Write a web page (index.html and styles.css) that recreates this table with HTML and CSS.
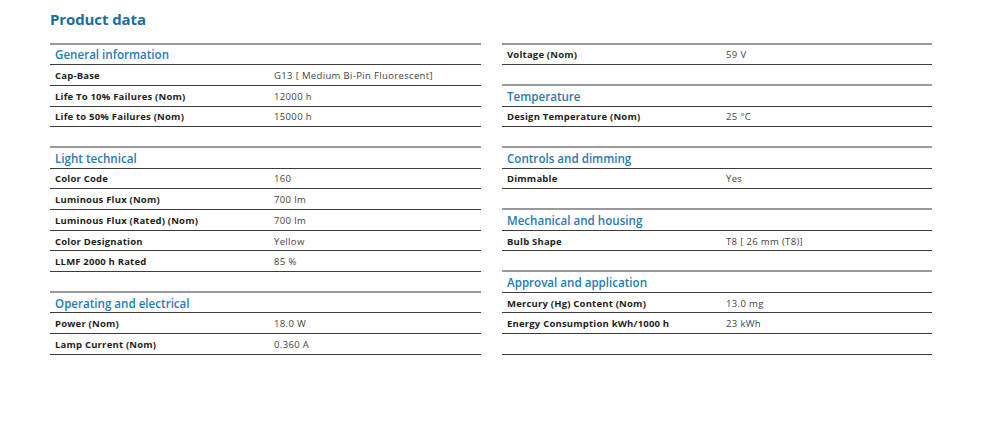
FILE: index.html
```html
<!DOCTYPE html>
<html>
<head>
<meta charset="utf-8">
<link rel="stylesheet" href="styles.css">
</head>
<body>
<div class="page">
  <h1 class="title">Product data</h1>
  <div class="sheet">
    <div class="col">
      <div class="row head">General information</div>
      <div class="row"><span class="lbl">Cap-Base</span><span class="val">G13 [ Medium Bi-Pin Fluorescent]</span></div>
      <div class="row"><span class="lbl">Life To 10% Failures (Nom)</span><span class="val">12000 h</span></div>
      <div class="row"><span class="lbl">Life to 50% Failures (Nom)</span><span class="val">15000 h</span></div>
      <div class="row gap"></div>
      <div class="row head">Light technical</div>
      <div class="row"><span class="lbl">Color Code</span><span class="val">160</span></div>
      <div class="row"><span class="lbl">Luminous Flux (Nom)</span><span class="val">700 lm</span></div>
      <div class="row"><span class="lbl">Luminous Flux (Rated) (Nom)</span><span class="val">700 lm</span></div>
      <div class="row"><span class="lbl">Color Designation</span><span class="val">Yellow</span></div>
      <div class="row"><span class="lbl">LLMF 2000 h Rated</span><span class="val">85 %</span></div>
      <div class="row gap"></div>
      <div class="row head">Operating and electrical</div>
      <div class="row"><span class="lbl">Power (Nom)</span><span class="val">18.0 W</span></div>
      <div class="row"><span class="lbl">Lamp Current (Nom)</span><span class="val">0.360 A</span></div>
    </div>
    <div class="col">
      <div class="row"><span class="lbl">Voltage (Nom)</span><span class="val">59 V</span></div>
      <div class="row gap"></div>
      <div class="row head">Temperature</div>
      <div class="row"><span class="lbl">Design Temperature (Nom)</span><span class="val">25 °C</span></div>
      <div class="row gap"></div>
      <div class="row head">Controls and dimming</div>
      <div class="row"><span class="lbl">Dimmable</span><span class="val">Yes</span></div>
      <div class="row gap"></div>
      <div class="row head">Mechanical and housing</div>
      <div class="row"><span class="lbl">Bulb Shape</span><span class="val">T8 [ 26 mm (T8)]</span></div>
      <div class="row gap"></div>
      <div class="row head">Approval and application</div>
      <div class="row"><span class="lbl">Mercury (Hg) Content (Nom)</span><span class="val">13.0 mg</span></div>
      <div class="row"><span class="lbl">Energy Consumption kWh/1000 h</span><span class="val">23 kWh</span></div>
      <div class="row gap last"></div>
    </div>
  </div>
</div>
</body>
</html>
```
FILE: styles.css
```css
html, body {
  margin: 0;
  padding: 0;
  background: #ffffff;
}
.page {
  padding: 8px 0 0 50px;
  font-family: "Open Sans", "Liberation Sans", sans-serif;
}
.title {
  margin: 0;
  font-size: 15px;
  line-height: 22px;
  font-weight: 700;
  color: #1b6d9e;
  letter-spacing: -0.1px;
}
.sheet {
  margin-top: 12.5px;
  display: grid;
  grid-template-columns: 431px 430px;
  column-gap: 21px;
  align-items: start;
}
.col {
  display: flex;
  flex-direction: column;
  border-top: 2px solid #9a9a9a;
}
.row {
  box-sizing: border-box;
  height: 20.69px;
  display: flex;
  align-items: center;
  padding-left: 5px;
  padding-top: 1px;
  border-bottom: 1px solid #3c3c3c;
  font-size: 9.5px;
}
.row.gap {
  border-bottom: 2px solid #9a9a9a;
}
.row.gap.last {
  border-bottom: 1px solid #3c3c3c;
}
.head {
  font-size: 11.6px;
  font-weight: 600;
  color: #1f7bb2;
}
.lbl {
  width: 219px;
  flex: none;
  font-weight: 700;
  color: #1e1e1e;
  letter-spacing: 0.2px;
}
.val {
  color: #444444;
  letter-spacing: 0.35px;
}
```
